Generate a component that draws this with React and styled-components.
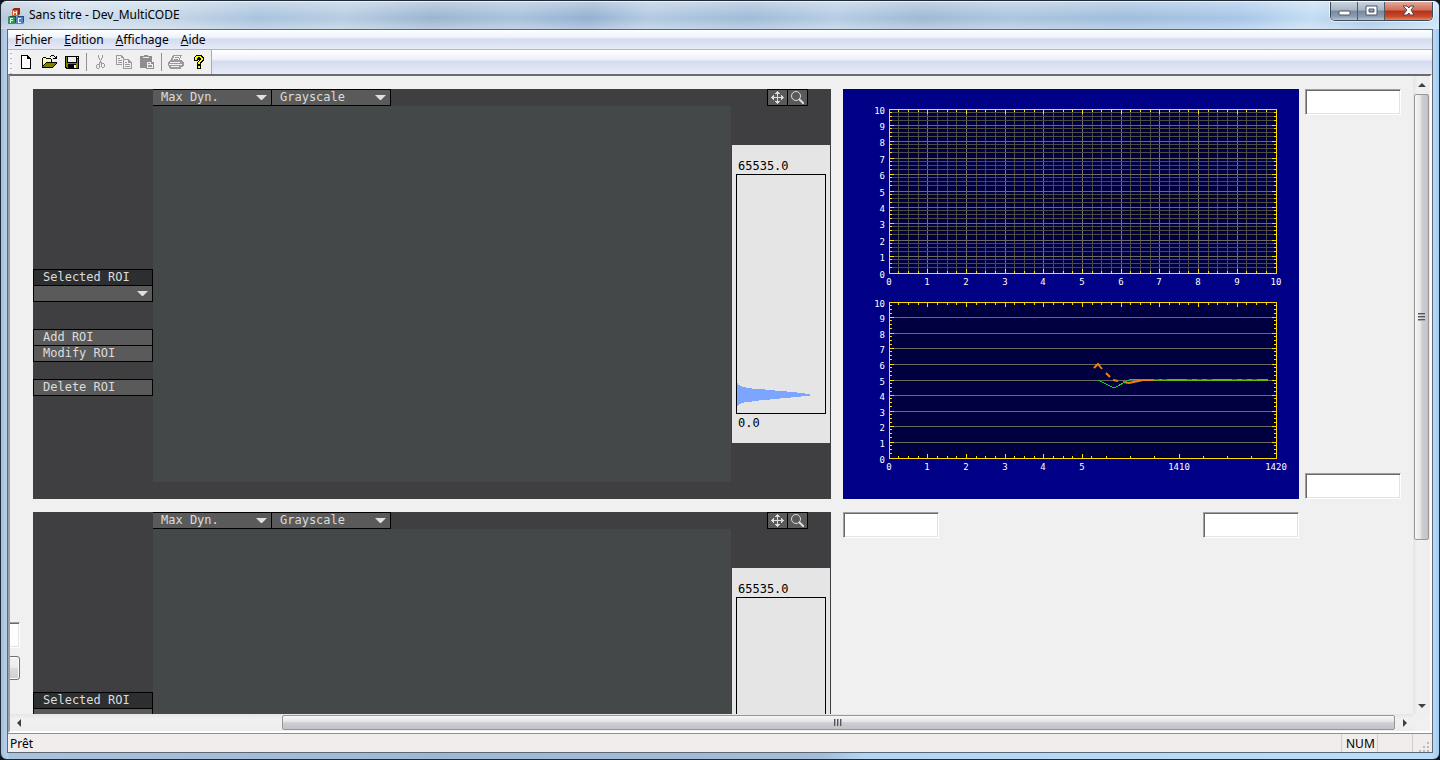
import React from 'react'
import styled, { createGlobalStyle, css } from 'styled-components';

const GlobalStyle = createGlobalStyle`
  * {
    box-sizing: border-box;
  }

  body {
    margin: 0;
    background: #10151c;
    font-family: "Noto Sans", "Open Sans", sans-serif;
    font-size: 12px;
    color: #000;
  }

  button, input, select {
    font: inherit;
    margin: 0;
    padding: 0;
    border-radius: 0;
    outline: none;
  }
`;

const mono = css`
  font-family: "DejaVu Sans Mono", "Liberation Mono", monospace;
  font-size: 12px;
  line-height: 15px;
`;

// ---------- window frame ----------

const Window = styled.div`
  display: flex;
  flex-direction: column;
  height: 100vh;
  padding: 0 6px 6px;
  border: 1px solid #1f2a36;
  border-radius: 7px;
  overflow: hidden;
  background:
    linear-gradient(90deg, #a5c0de 0, #b9d1ea 7px, transparent 8px, transparent calc(100% - 8px), #b9ddfa calc(100% - 7px), #a5cdf0 100%),
    linear-gradient(90deg, #a9c2de 0%, #9db8d5 30%, #a3bcd8 57%, #b2d6f5 60%, #b9dffc 100%);
`;

const TitleBar = styled.header`
  display: flex;
  align-items: flex-start;
  flex: none;
  height: 28px;
  margin: 0 -6px;
  padding: 0 6px 0 7px;
  border-top: 1px solid #e9f3fb;
  background:
    linear-gradient(180deg, rgba(255, 255, 255, 0.35), rgba(255, 255, 255, 0) 60%, rgba(255, 255, 255, 0.3)),
    linear-gradient(100deg, #b5c6d8 0%, #cfdeec 5%, #c3d5e6 12%, #a9c3de 18%, #b6cce2 24%, #9bb5d1 30%, #a8c1dd 36%,
      #94b0d0 41%, #b2c9e2 45%, #a0bbd8 52%, #b5cce4 58%, #9fb9d5 64%, #acc5df 70%, #9fbddc 78%, #a7c6e8 86%, #c2dcf3 91%, #a9c8e6 95%, #c9e2f7 100%);
`;

const TitleText = styled.h1`
  flex: 1;
  margin: 4px 0 0 5px;
  font-size: 12px;
  line-height: 17px;
  font-weight: 400;
`;

const AppIcon = styled.svg`
  flex: none;
  margin-top: 5px;
`;

const CaptionButtons = styled.div`
  display: flex;
  height: 19px;
  border: 1px solid #3d4957;
  border-top: 0;
  border-radius: 0 0 5px 5px;
  overflow: hidden;
  box-shadow: 0 0 0 1px rgba(255, 255, 255, 0.6);
`;

const CaptionButton = styled.button`
  display: flex;
  align-items: center;
  justify-content: center;
  width: ${props => props.$close ? '47px' : '27px'};
  border: 0;
  border-right: ${props => props.$close ? '0' : '1px solid #4d5a68'};
  background: ${props => props.$close
    ? 'linear-gradient(180deg, #e2a898 0%, #cf6f58 45%, #b5301a 50%, #c8492c 80%, #e08a5e 100%)'
    : 'linear-gradient(180deg, #c9d3de 0%, #a8b6c6 45%, #77889c 50%, #8b9db1 80%, #b3c4d5 100%)'};
`;

const Client = styled.main`
  display: flex;
  flex-direction: column;
  flex: 1;
  min-height: 0;
  border: 1px solid #5c6874;
  background: #f0f0f0;
`;

// ---------- menu and toolbar ----------

const band = css`
  background: linear-gradient(180deg, #fff 0%, #eef2fa 38%, #d5dcee 48%, #dfe5f4 80%, #e6ebf8 100%);
`;

const MenuBar = styled.nav`
  display: flex;
  flex: none;
  height: 20px;
  padding-left: 1px;
  border-bottom: 1px solid #b0b5c2;
  ${band}
`;

const MenuItem = styled.button`
  padding: 0 6px;
  border: 0;
  background: none;
  line-height: 19px;
`;

const ToolBand = styled.div`
  display: flex;
  flex: none;
  height: 24px;
  ${band}
`;

const ToolBar = styled.div`
  display: flex;
  align-items: center;
  height: 24px;
  padding: 0 1px 0 6px;
  border-right: 1px solid #a9a9b2;
  background: radial-gradient(circle, #b4b7c4 1px, transparent 1px) 1px 1px / 4px 5px repeat-y, linear-gradient(90deg, #f4f5fa, #f0f0f0 12px);
`;

const ToolButton = styled.button`
  display: flex;
  align-items: center;
  justify-content: center;
  width: 23px;
  height: 22px;
  border: 0;
  background: none;
`;

const Separator = styled.span`
  width: 1px;
  height: 18px;
  margin: 0 2px 0 3px;
  background: #929292;
`;

// ---------- scrolled view ----------

const View = styled.div`
  display: grid;
  grid-template-columns: minmax(0, 1fr) 17px;
  grid-template-rows: minmax(0, 1fr) 17px;
  flex: 1;
  min-height: 0;
  border: 2px solid #fff;
  border-top-color: #6b6b6f;
  border-left-color: #a0a0a0;
`;

const Viewport = styled.section`
  display: grid;
  grid-template-columns: 10px minmax(0, 1fr) 456px 102px;
  grid-template-rows: 410px 410px;
  gap: 13px 0;
  padding: 13px 12px 0 0;
  overflow: hidden;
`;

const ScrollTrack = styled.div`
  display: flex;
  flex-direction: ${props => props.$vertical ? 'column' : 'row'};
  background: ${props => props.$vertical
    ? 'linear-gradient(90deg, #e6e6e6, #f1f1f1 30%, #ededed)'
    : 'linear-gradient(180deg, #e6e6e6, #f1f1f1 30%, #ededed)'};
`;

const ScrollArrow = styled.button`
  display: flex;
  align-items: center;
  justify-content: center;
  flex: none;
  width: 17px;
  height: 17px;
  border: 0;
  background: none;
`;

const ScrollSpace = styled.div`
  flex: ${props => props.$grow} 0 0;
`;

const ScrollThumb = styled.div`
  display: flex;
  align-items: center;
  justify-content: center;
  flex: ${props => props.$grow} 0 0;
  margin: 1px;
  border: 1px solid #979797;
  border-radius: 2px;
  background: linear-gradient(${props => props.$vertical ? '90deg' : '180deg'}, #f7f7f7 0%, #e4e4e6 45%, #cfcfd3 52%, #c3c3c7 100%);
`;

const Field = styled.input`
  flex: none;
  width: 96px;
  height: 26px;
  padding: 0 4px;
  border: 1px solid;
  border-color: #a0a0a0 #fff #fff #a0a0a0;
  background: #fff;
  box-shadow: inset 1px 1px 0 #696969, inset -1px -1px 0 #e3e3e3;
`;

const PushButton = styled.button`
  flex: none;
  width: 96px;
  height: 24px;
  border: 1px solid #707070;
  border-radius: 3px;
  background: linear-gradient(180deg, #f2f2f2 0%, #ebebeb 49%, #dddddd 50%, #cfcfcf 100%);
  box-shadow: inset 0 0 0 1px #fbfbfb;
`;

const Gutter = styled.div`
  grid-column: 1;
  grid-row: 2;
  display: flex;
  flex-direction: column;
  align-items: flex-end;
  gap: 8px;
  padding-top: 110px;
`;

const SideFields = styled.div`
  grid-column: 4;
  grid-row: 1;
  display: flex;
  flex-direction: column;
  align-items: flex-end;
  justify-content: space-between;
`;

const BottomFields = styled.div`
  grid-column: 3;
  grid-row: 2;
  display: flex;
  align-items: flex-start;
  justify-content: space-between;
`;

// ---------- camera panel ----------

const Camera = styled.article`
  grid-column: 2;
  display: grid;
  grid-template-columns: 120px minmax(0, 1fr) 100px;
  grid-template-rows: 17px 1fr 17px;
  margin: 0 12px 0 13px;
  background: #3f3e40;
  color: #dcdcdc;
  ${mono}
`;

const CameraBar = styled.div`
  grid-column: 2 / 4;
  display: flex;
  padding-right: 23px;
`;

const Spring = styled.span`
  flex: 1;
`;

const DropDown = styled.span`
  position: relative;
  display: block;
  width: ${props => props.$wide ? '120px' : '119px'};
  height: 17px;
  margin-top: ${props => props.$wide ? '-1px' : '0'};

  select {
    appearance: none;
    display: block;
    width: 100%;
    height: 17px;
    padding: 0 20px 0 ${props => props.$wide ? '9px' : '8px'};
    border: 1px solid #000;
    border-left-width: ${props => props.$wide ? '1px' : '0'};
    background: #5a5a5a;
    color: #dcdcdc;
    ${mono}
  }

  svg {
    position: absolute;
    right: 5px;
    top: 6px;
    pointer-events: none;
  }
`;

const IconButton = styled.button`
  display: flex;
  align-items: center;
  justify-content: center;
  width: 21px;
  height: 17px;
  border: 1px solid #000;
  background: #5a5a5a;

  & + & {
    margin-left: -1px;
  }
`;

const RoiColumn = styled.div`
  grid-column: 1;
  grid-row: 1 / 4;
  padding-top: 180px;
`;

const RoiLabel = styled.label`
  display: block;
  height: 17px;
  padding-left: 9px;
  border: 1px solid #000;
  background: #2d2e30;
`;

const RoiButtons = styled.div`
  margin-top: ${props => props.$far ? '27px' : '17px'};
`;

const RoiButton = styled.button`
  display: block;
  width: 100%;
  height: 17px;
  padding-left: 9px;
  border: 1px solid #000;
  background: #5a5a5a;
  color: #dcdcdc;
  text-align: left;
  ${mono}

  & + & {
    margin-top: -1px;
  }
`;

const Picture = styled.div`
  grid-column: 2;
  grid-row: 2;
  background: #454849;
`;

const Histogram = styled.figure`
  grid-column: 3;
  grid-row: 2;
  align-self: start;
  height: 298px;
  margin: 39px 1px 0;
  padding: 14px 4px 0;
  background: #e5e5e5;
  color: #000;

  svg {
    display: block;
    width: 100%;
    margin-bottom: 2px;
  }

  span {
    display: block;
    padding-left: 2px;
  }
`;

const Charts = styled.svg`
  grid-column: 3;
  grid-row: 1;
  display: block;
  background: #000087;

  text {
    font-family: "DejaVu Sans Mono", monospace;
    font-size: 9px;
    fill: #fff;
  }
`;

// ---------- status bar ----------

const StatusBar = styled.footer`
  display: flex;
  flex: none;
  height: 19px;
  border-top: 1px solid #8f8f8f;
  background: #f1edec;
  line-height: 19px;
`;

const StatusText = styled.span`
  flex: 1;
  padding-left: 2px;
`;

const StatusCell = styled.span`
  width: ${props => props.$width}px;
  padding-left: 4px;
  border-left: 1px solid #d2cfce;
`;

const Grip = styled.svg`
  flex: none;
  align-self: flex-end;
  margin-right: 2px;
`;

const toolIcons = {
  Nouveau: (
    <path d="M3 1h7v1h1v1h1v1h1v11H3z M4 2v12h8V5H9V2z" fill="#000" fillRule="evenodd" />
  ),
  Ouvrir: (
    <>
      <path d="M1 5h1V4h3v1h5v3H5v1H4v2H3v2H1z" fill="#ffff9c" />
      <path d="M5 9h10v1h-1v1h-1v1h-1v1H2v-1h1v-1h1v-1h1z" fill="#808000" />
      <path d="M1 4h1v9H1z M2 3h3v1H2z M5 4h5v1H5z M10 5h1v3h-1z M5 8h11v1H5z M4 9h1v1H4z M3 10h1v1H3z M2 11h1v1H2z M1 13h11v1H1z M12 12h1v1h-1z M13 11h1v1h-1z M14 10h1v1h-1z M15 9h1v1h-1z M9 2h1v1H9z M10 1h3v1h-3z M13 2h1v1h-1z M14 3h1v2h-3V4h2z M15 2h1v3h-1z" fill="#000" />
    </>
  ),
  Enregistrer: (
    <>
      <path d="M1 2h14v13H2v-1H1z" fill="#000" />
      <path d="M2 3h1v10H2z M13 5h1v9h-1z M3 9h10v1H3z M3 10h1v4H3z M12 10h1v4h-1z" fill="#808000" />
      <path d="M4 3h8v5H4z M13 3h1v1h-1z M10 11h2v3h-2z" fill="#efefef" />
    </>
  ),
  Couper: (
    <path d="M5 1h1v3H5z M9 1h1v3H9z M6 4h1v2H6z M8 4h1v2H8z M7 6h1v3H7z M6 8h1v2H6z M8 8h1v2H8z M4 10h2v1H4z M3 11h1v3H3z M4 14h2v1H4z M6 10h1v4H6z M9 9h2v1H9z M8 10h1v3H8z M9 13h2v1H9z M11 10h1v3h-1z" fill="#9a9a9a" />
  ),
  Copier: (
    <path d="M0 1h6v1h1v1h1v2H7V4H5V2H1v8h5v1H0z M2 4h2v1H2z M2 6h4v1H2z M2 8h4v1H2z M7 5h6v1h1v1h1v1h1v7H7z M8 6v8h7V9h-3V6z M9 8h2v1H9z M9 10h5v1H9z M9 12h5v1H9z" fill="#9a9a9a" fillRule="evenodd" />
  ),
  Coller: (
    <>
      <path d="M1 2h4V1h4v1h4v6h2v7H7v-1H1z" fill="#8e8e8e" />
      <path d="M4 3h6v1H4z M8 8h4v2h2v4H8z" fill="#efefef" />
      <path d="M9 9h2v1H9z M9 11h4v1H9z M9 13h4v-1H9z" fill="#9a9a9a" />
    </>
  ),
  Imprimer: (
    <path d="M5 1h9v1h-1v2h-1v2h2v1h1v1h1v4h-1v1h-2v2H2v-1H1v-2H0V8h1V7h1V6h1V4h1V2h1z M6 2v2H5v2h6V4h1V2z M7 3h4v1H7z M6 5h4v1H6z M2 8v1h10V8z M1 10v1h13v-1z M3 12v1h8v-1z" fill="#9a9a9a" fillRule="evenodd" />
  ),
  Aide: (
    <>
      <path d="M5 1h6v1h1v1h1v4h-1v1h-1v1h-1v2H6V8h1V7h1V6H7v1H3V3h1V2h1z M6 11h4v4H6z" fill="#000" />
      <path d="M5 2h5v1h1v1h1v2h-1v1h-1v1H9v2H7V8h1V7h1V6h1V4H9V3H7v1H6v2H4V3h1z M7 12h2v2H7z" fill="#ffff00" />
    </>
  ),
};

const Tool = ({ name, disabled }) => (
  <ToolButton type="button" aria-label={name} title={name} disabled={disabled}>
    <svg width="16" height="16" viewBox="0 0 16 16" shapeRendering="crispEdges">
      {name === 'Nouveau' && <path d="M4 2h6l2 3v9H4z" fill="#fff" />}
      {toolIcons[name]}
    </svg>
  </ToolButton>
);

const arrows = {
  up: 'M4 2l4 4H0z',
  down: 'M0 2h8L4 6z',
  left: 'M6 0v8L2 4z',
  right: 'M2 0v8l4-4z',
};

const Arrow = ({ dir }) => (
  <ScrollArrow type="button" aria-label={dir}>
    <svg width="8" height="8" viewBox="0 0 8 8"><path d={arrows[dir]} fill="#404040" /></svg>
  </ScrollArrow>
);

const ScrollBar = ({ vertical, before, thumb, after }) => (
  <ScrollTrack $vertical={vertical}>
    <Arrow dir={vertical ? 'up' : 'left'} />
    <ScrollSpace $grow={before} />
    <ScrollThumb $vertical={vertical} $grow={thumb}>
      <svg width="8" height="8" viewBox="0 0 8 8" shapeRendering="crispEdges">
        <path d={vertical ? 'M0 0h7v1H0z M0 3h7v1H0z M0 6h7v1H0z' : 'M0 0h1v7H0z M3 0h1v7H3z M6 0h1v7H6z'} fill="#55555a" />
        <path d={vertical ? 'M0 1h7v1H0z M0 4h7v1H0z M0 7h7v1H0z' : 'M1 0h1v7H1z M4 0h1v7H4z M7 0h1v7H7z'} fill="#a5a5aa" />
      </svg>
    </ScrollThumb>
    <ScrollSpace $grow={after} />
    <Arrow dir={vertical ? 'down' : 'right'} />
  </ScrollTrack>
);

const Select = ({ id, label, value, wide }) => (
  <DropDown $wide={wide}>
    <select id={id} aria-label={label} defaultValue={value}>
      <option value={value}>{value}</option>
    </select>
    <svg width="11" height="6" viewBox="0 0 11 6"><path d="M0 0h11L6 5H5z" fill="#e0e0e0" /></svg>
  </DropDown>
);

// bar lengths of the histogram, one per pixel row
const HISTOGRAM = [1, 1, 3, 5, 9, 15, 28, 38, 50, 60, 68, 73, 73, 64, 54, 43, 33, 22, 15, 7, 4, 2, 1];

const CameraPanel = ({ id }) => (
  <Camera>
    <CameraBar>
      <Select label="Dynamic" value="Max Dyn." />
      <Select label="Palette" value="Grayscale" />
      <Spring />
      <IconButton type="button" aria-label="Move">
        <svg width="13" height="13" viewBox="0 0 13 13" shapeRendering="crispEdges">
          <path d="M6 0h1v1h1v1h1v1H7v3h3V4h1v1h1v1h1v1h-1v1h-1v1h-1V7H7v3h2v1H8v1H7v1H6v-1H5v-1H4v-1h2V7H3v2H2V8H1V7H0V6h1V5h1V4h1v2h3V3H4V2h1V1h1z" fill="#dcdcdc" />
        </svg>
      </IconButton>
      <IconButton type="button" aria-label="Zoom">
        <svg width="13" height="13" viewBox="0 0 13 13">
          <circle cx="5" cy="5" r="4.5" fill="none" stroke="#dcdcdc" />
          <path d="M8 8l5 5" stroke="#dcdcdc" strokeWidth="2" />
        </svg>
      </IconButton>
    </CameraBar>
    <RoiColumn>
      <RoiLabel htmlFor={id}>Selected ROI</RoiLabel>
      <Select id={id} label="Selected ROI" value="" wide />
      <RoiButtons $far>
        <RoiButton type="button">Add ROI</RoiButton>
        <RoiButton type="button">Modify ROI</RoiButton>
      </RoiButtons>
      <RoiButtons>
        <RoiButton type="button">Delete ROI</RoiButton>
      </RoiButtons>
    </RoiColumn>
    <Picture />
    <Histogram>
      <span>65535.0</span>
      <svg width="90" height="240" viewBox="0 0 90 240" shapeRendering="crispEdges">
        <path d="M0 0h90v240H0z M1 1v238h88V1z" fillRule="evenodd" />
        {HISTOGRAM.map((length, i) => (
          <rect key={i} x="1" y={209 + i} width={length} height="1" fill="#7ba5ff" />
        ))}
      </svg>
      <span>0.0</span>
    </Histogram>
  </Camera>
);

const LEFT = 46;
const RIGHT = 433;
const TICKS = [0, 1, 2, 3, 4, 5, 6, 7, 8, 9, 10];

const vline = (x, y, h) => `M${x} ${y}h1v${h}h-1z`;
const hline = (x, y, w) => `M${x} ${y}h${w}v1h-${w}z`;

const xAt = value => Math.floor(LEFT + value * (RIGHT - LEFT) / 10);
const quarters = t => [0.25, 0.5, 0.75].map(f => xAt(t + f));

const MAJOR_X = TICKS.map(xAt);
const MINOR_X = TICKS.slice(0, 10).flatMap(quarters);
const EVEN_TICKS = TICKS.map(t => ({ x: xAt(t), text: t }));

// the lower axis changes scale after the fifth mark
const SPLIT_TICKS = [
  ...EVEN_TICKS.slice(0, 6),
  { x: 336, text: 1410 },
  { x: 433, text: 1420 },
];
const SPLIT_MINOR = [
  ...[0, 1, 2, 3, 4].flatMap(quarters),
  248, 263, 287, 311, 360, 384, 408,
];

const Plot = ({ top, bottom, grid, xTicks = EVEN_TICKS, xMinor = MINOR_X, children }) => {
  const width = RIGHT - LEFT;
  const height = bottom - top;
  const majorY = TICKS.map(t => Math.floor(bottom - t * height / 10));
  const minorY = majorY.slice(1).flatMap(y => [y + 3, y + 7, y + 11]);

  return (
    <g>
      <g shapeRendering="crispEdges">
        <rect x={LEFT} y={top} width={width + 1} height={height + 1} fill="#000040" />
        {grid && <path d={MAJOR_X.map(x => vline(x, top, height)).join('')} fill="#74746c" />}
        {grid && <path d={MINOR_X.map(x => vline(x, top, height)).join('')} fill="#4c4c44" />}
        {grid && <path d={minorY.map(y => hline(LEFT, y, width)).join('')} fill="#4c4c44" />}
        <path d={majorY.map(y => hline(LEFT, y, width)).join('')} fill="#6b6b64" />
      </g>
      {children}
      <g fill="#ffdc00" shapeRendering="crispEdges">
        <path d={hline(LEFT, top, width + 1) + hline(LEFT, bottom, width + 1)} />
        <path d={vline(LEFT, top, height) + vline(RIGHT, top, height)} />
        <path d={MAJOR_X.map(x => vline(x, top, 5)).join('')} />
        <path d={MINOR_X.map(x => vline(x, top, 3)).join('')} />
        <path d={xTicks.map(t => vline(t.x, bottom - 4, 5)).join('')} />
        <path d={xMinor.map(x => vline(x, bottom - 2, 3)).join('')} />
        <path d={majorY.map(y => hline(LEFT, y, 5) + hline(RIGHT - 4, y, 5)).join('')} />
        <path d={minorY.map(y => hline(LEFT, y, 3) + hline(RIGHT - 2, y, 3)).join('')} />
      </g>
      {TICKS.map((t, i) => (
        <text key={t} x={LEFT - 4} y={majorY[i] + 5} textAnchor="end">{t}</text>
      ))}
      {xTicks.map(t => (
        <text key={t.x} x={t.x} y={bottom + 12} textAnchor="middle">{t.text}</text>
      ))}
    </g>
  );
};

const SHADE_DASHES = [311, 319, 344, 354, 364, 389, 399, 409];

const ChartPanel = () => (
  <Charts width="456" height="410" viewBox="0 0 456 410">
    <Plot top={20} bottom={184} grid />
    <Plot top={213} bottom={369} xTicks={SPLIT_TICKS} xMinor={SPLIT_MINOR}>
      <path
        d="M251 279L255 275L259 280 M263 284L267 288 M270 291L275 292 M280 293L286 294L300 291L311 291"
        fill="none"
        stroke="#f08010"
        strokeWidth="2"
      />
      <path d="M255 291L271 299L286 291L302 290L318 291" fill="none" stroke="#00dc1e" shapeRendering="crispEdges" />
      <rect x="311" y="290" width="114" height="2" fill="#66b800" shapeRendering="crispEdges" />
      <path d={SHADE_DASHES.map(x => hline(x, 290, 5)).join('')} fill="#00803c" shapeRendering="crispEdges" />
    </Plot>
  </Charts>
);

const MENU = ['Fichier', 'Edition', 'Affichage', 'Aide'];

const App = () => (
  <>
    <GlobalStyle />
    <Window>
      <TitleBar>
        <AppIcon width="16" height="18" viewBox="0 0 16 18">
          <path d="M4 3l2-2h6v6l-2 2H4z" fill="#8c2a12" />
          <path d="M4 3h6v6H4z" fill="#e2592c" />
          <path d="M5 4h1v1h2V4h1v4H8V6H6v2H5z" fill="#fff0d8" />
          <path d="M0 10l2-1h6v7l-1 1H0z" fill="#0f5a34" />
          <path d="M0 10h7v7H0z" fill="#2c9a5c" />
          <path d="M2 11h3v1H3v1h2v1H3v2H2z" fill="#e8fff0" />
          <path d="M8 10l2-1h6v6l-1 2H8z" fill="#1e4a94" />
          <path d="M8 10h7v7H8z" fill="#4f86cf" />
          <path d="M10 11h3v1h-2v3h2v1h-3z" fill="#f0f6ff" />
        </AppIcon>
        <TitleText>Sans titre - Dev_MultiCODE</TitleText>
        <CaptionButtons>
          <CaptionButton type="button" aria-label="Minimize">
            <svg width="13" height="13" viewBox="0 0 13 13"><rect x="1" y="6" width="11" height="4" rx="1" fill="#fff" stroke="#4b5766" /></svg>
          </CaptionButton>
          <CaptionButton type="button" aria-label="Maximize">
            <svg width="13" height="13" viewBox="0 0 13 13">
              <path d="M1 1h11v9H1z M4 4v3h5V4z" fill="#fff" stroke="#4b5766" fillRule="evenodd" />
            </svg>
          </CaptionButton>
          <CaptionButton type="button" aria-label="Close" $close>
            <svg width="13" height="13" viewBox="0 0 13 13">
              <path d="M1 1h4l2 2 1-2h4L9 5l3 5H8L7 8l-2 2H1l4-5z" fill="#fff" stroke="#5a4048" />
            </svg>
          </CaptionButton>
        </CaptionButtons>
      </TitleBar>
      <Client>
        <MenuBar>
          {MENU.map(item => (
            <MenuItem key={item} type="button"><u>{item[0]}</u>{item.slice(1)}</MenuItem>
          ))}
        </MenuBar>
        <ToolBand>
          <ToolBar>
            <Tool name="Nouveau" />
            <Tool name="Ouvrir" />
            <Tool name="Enregistrer" />
            <Separator />
            <Tool name="Couper" disabled />
            <Tool name="Copier" disabled />
            <Tool name="Coller" disabled />
            <Separator />
            <Tool name="Imprimer" disabled />
            <Tool name="Aide" />
          </ToolBar>
        </ToolBand>
        <View>
          <Viewport>
            <Gutter>
              <Field type="text" aria-label="Offset" />
              <PushButton type="button" aria-label="Apply" />
            </Gutter>
            <CameraPanel id="roi-1" />
            <ChartPanel />
            <SideFields>
              <Field type="text" aria-label="Maximum" />
              <Field type="text" aria-label="Minimum" />
            </SideFields>
            <CameraPanel id="roi-2" />
            <BottomFields>
              <Field type="text" aria-label="Start" />
              <Field type="text" aria-label="End" />
            </BottomFields>
          </Viewport>
          <ScrollBar vertical before={0} thumb={447} after={157} />
          <ScrollBar before={254} thumb={1112} after={0} />
        </View>
        <StatusBar>
          <StatusText>Prêt</StatusText>
          <StatusCell $width={36}>NUM</StatusCell>
          <StatusCell $width={35} />
          <StatusCell $width={6} />
          <Grip width="12" height="12" viewBox="0 0 12 12" shapeRendering="crispEdges">
            <path d="M9 2h2v2H9z M5 6h2v2H5z M9 6h2v2H9z M1 10h2v2H1z M5 10h2v2H5z M9 10h2v2H9z" fill="#bdb9b8" />
          </Grip>
        </StatusBar>
      </Client>
    </Window>
  </>
);

export default App
